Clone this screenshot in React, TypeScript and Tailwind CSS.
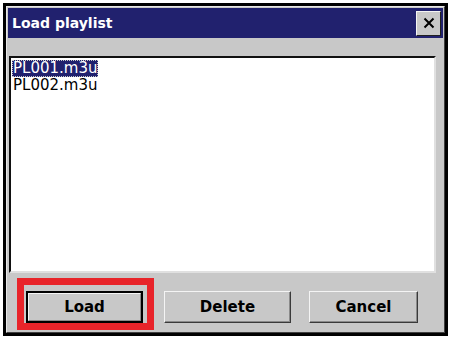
import React from 'react';

const font = { fontFamily: '"DejaVu Sans", Tahoma, sans-serif' };

function WinButton({ label, className = '' }: { label: string; className?: string }) {
  return (
    <div
      className={`flex items-center justify-center h-[32px] bg-[#c8c8c8] border border-[#3a3a3a] border-l-[#f4f4f4] border-t-[#f4f4f4] shadow-[inset_-1px_-1px_0_#8a8a8a] text-[15px] font-bold text-black ${className}`}
    >
      {label}
    </div>
  );
}

export default function App() {
  return (
    <div className="w-[454px] h-[339px] bg-white p-[3px]" style={font}>
      <div className="w-[445px] h-[333px] border-[3px] border-black bg-[#c8c8c8] flex flex-col">
        <div className="border border-[#e8e8e8] border-r-[#404040] border-b-[#404040] flex-1 flex flex-col p-[1px]">
          {/* title bar */}
          <div className="h-[30px] bg-[#21216e] flex items-center justify-between pl-[4px] pr-[2px]">
            <span className="text-white font-bold text-[14px]">Load playlist</span>
            <div className="w-[25px] h-[25px] bg-[#c8c8c8] border border-[#202020] border-l-[#f4f4f4] border-t-[#f4f4f4] flex items-center justify-center">
              <svg width="12" height="12" viewBox="0 0 12 12">
                <path d="M1.5 1.5 L10.5 10.5 M10.5 1.5 L1.5 10.5" stroke="#000" strokeWidth="2" />
              </svg>
            </div>
          </div>
          {/* body */}
          <div className="flex-1 flex flex-col px-[1px] pt-[18px]">
            <div className="h-[217px] mr-[6px] bg-white border-2 border-[#111] border-r-[#e0e0e0] border-b-[#e0e0e0] pt-[2px] pl-[1px]">
              <div className="flex flex-col text-[15px] leading-[17px] text-black">
                <span className="self-start bg-[#21216e] text-white outline outline-1 outline-dotted outline-[#c8c8c8] -outline-offset-1 px-[1px]">PL001.m3u</span>
                <span className="px-[1px]">PL002.m3u</span>
              </div>
            </div>
            <div className="flex items-start mt-[5px] pl-[8px]">
              <div className="w-[137px] h-[52px] border-[7px] border-[#e8242a] pt-[6px] pl-[2px]">
                <div className="w-[117px] h-[32px] bg-black p-[2px]">
                  <div className="w-full h-full bg-[#c8c8c8] border border-[#f4f4f4] border-r-[#8a8a8a] border-b-[#8a8a8a] flex items-center justify-center text-[15px] font-bold">
                    Load
                  </div>
                </div>
              </div>
              <WinButton label="Delete" className="w-[127px] ml-[10px] mt-[13px]" />
              <WinButton label="Cancel" className="w-[109px] ml-[18px] mt-[13px]" />
            </div>
          </div>
        </div>
      </div>
    </div>
  );
}
